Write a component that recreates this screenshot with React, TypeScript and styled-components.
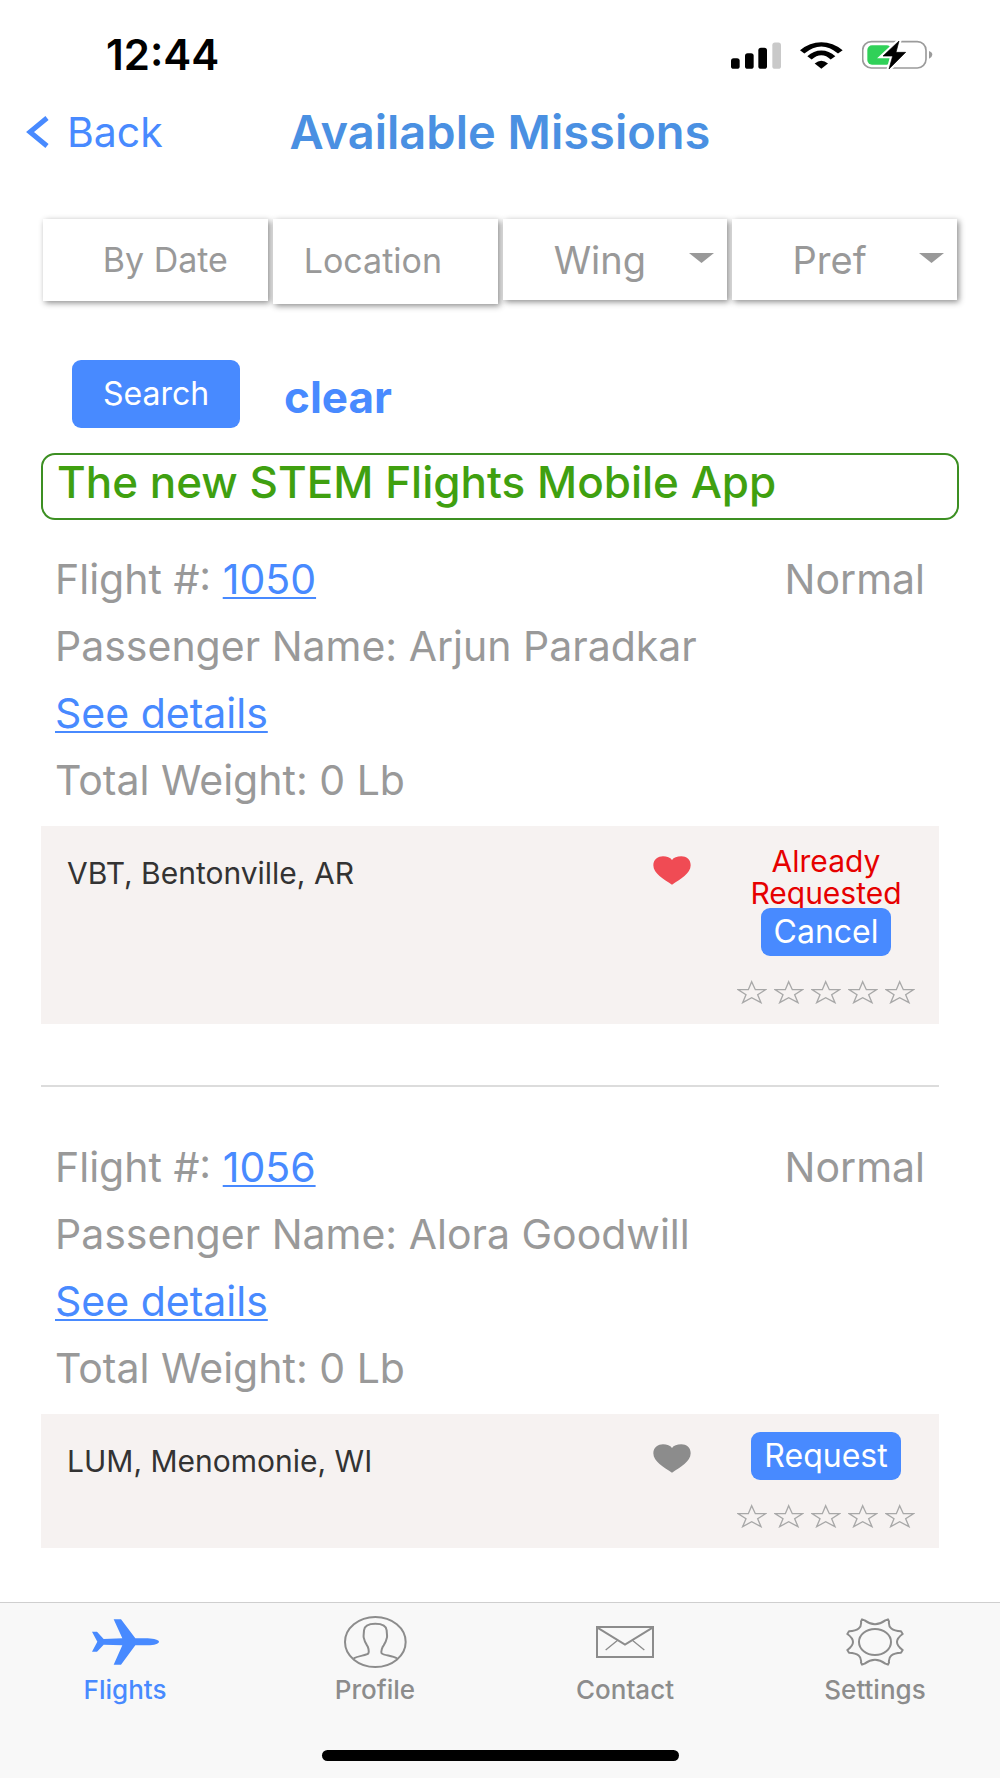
import React from "react";
import styled, { createGlobalStyle } from "styled-components";

const blue = "#488aff";
const gray = "#999999";

const GlobalStyle = createGlobalStyle`
  *, *::before, *::after { box-sizing: border-box; }
  body {
    margin: 0;
    background: #ffffff;
    color: ${gray};
    font-family: Inter, "Liberation Sans", sans-serif;
  }
  button, input, select { font: inherit; color: inherit; }
`;

const Page = styled.div`
  display: flex;
  flex-direction: column;
  min-height: 100vh;
`;

const StatusBar = styled.div`
  display: flex;
  align-items: center;
  justify-content: space-between;
  height: 96px;
  padding: 14px 67px 0 106px;
  color: #000000;
`;

const Clock = styled.time`
  font-size: 42px;
  font-weight: 600;
  line-height: 48px;
`;

const StatusIcons = styled.div`
  display: flex;
  align-items: center;
  gap: 19px;
`;

const Header = styled.header`
  display: grid;
  grid-template-columns: 1fr auto 1fr;
  align-items: center;
  height: 72px;
  padding: 0 26px;
`;

const BackButton = styled.button`
  display: flex;
  align-items: center;
  justify-self: start;
  gap: 17px;
  padding: 0;
  border: 0;
  background: none;
  color: ${blue};
  font-size: 41px;
  line-height: 48px;
`;

const Title = styled.h1`
  margin: 0;
  color: #4a90e2;
  font-size: 47px;
  font-weight: 600;
  line-height: 54px;
`;

const Main = styled.main`
  flex: 1;
  padding: 51px 41px 54px;
`;

const Filters = styled.div`
  display: grid;
  grid-template-columns: repeat(4, 1fr);
  align-items: start;
  gap: 5px;
  padding: 0 2px;
`;

const fieldShadow = "2px 2px 6px rgba(0, 0, 0, 0.45)";

const FilterInput = styled.input<{ $height: number; $indent: number; $center?: boolean }>`
  width: 100%;
  min-width: 0;
  height: ${(p) => p.$height}px;
  padding: 0 0 2px ${(p) => p.$indent}px;
  border: 0;
  background: #ffffff;
  box-shadow: ${fieldShadow};
  font-size: 34px;
  text-align: ${(p) => (p.$center ? "center" : "left")};
  &::placeholder { color: ${gray}; opacity: 1; }
`;

const SelectBox = styled.div`
  position: relative;
  height: 81px;
  background: #ffffff;
  box-shadow: ${fieldShadow};
`;

const FilterSelect = styled.select`
  width: 100%;
  height: 100%;
  padding: 0 30px 0 0;
  border: 0;
  appearance: none;
  background: transparent;
  font-size: 38px;
  text-align: center;
  text-align-last: center;
`;

const Caret = styled.svg`
  position: absolute;
  top: 34px;
  right: 13px;
  pointer-events: none;
`;

const Actions = styled.div`
  display: flex;
  align-items: center;
  gap: 44px;
  height: 68px;
  margin: 56px 31px 25px;
`;

const SearchButton = styled.button`
  width: 168px;
  height: 68px;
  padding: 0 0 2px;
  border: 0;
  border-radius: 9px;
  background: ${blue};
  color: #ffffff;
  font-size: 32px;
`;

const ClearButton = styled.button`
  padding: 6px 0 0;
  border: 0;
  background: none;
  color: ${blue};
  font-size: 44px;
  font-weight: 700;
`;

const Banner = styled.p`
  height: 67px;
  margin: 0 0 26px;
  padding: 0 14px;
  border: 2px solid #3c8f22;
  border-radius: 14px;
  color: #3fa010;
  font-size: 44px;
  font-weight: 500;
  line-height: 54px;
`;

const FlightList = styled.div`
  margin-right: 20px;
`;

const Flight = styled.article`
  & + & {
    margin-top: 61px;
    padding-top: 47px;
    border-top: 2px solid #dcdcdc;
  }
`;

const Facts = styled.div`
  padding: 0 14px 12px;
  font-size: 41px;
  line-height: 67px;
`;

const FactRow = styled.div`
  display: flex;
  justify-content: space-between;
`;

const Link = styled.a`
  color: ${blue};
  text-decoration: underline;
  text-decoration-thickness: 2px;
  text-underline-offset: 3px;
`;

const Leg = styled.div`
  display: grid;
  grid-template-columns: 1fr auto 180px;
  align-items: start;
  column-gap: 45px;
  padding: 18px 23px 20px 26px;
  background: #f6f2f1;
`;

const Airport = styled.span`
  padding-top: 13px;
  color: #333333;
  font-size: 30px;
  line-height: 32px;
`;

const HeartButton = styled.button`
  display: flex;
  padding: 12px 0 0;
  border: 0;
  background: none;
`;

const LegSide = styled.div`
  display: flex;
  flex-direction: column;
  align-items: center;
`;

const Notice = styled.span`
  height: 64px;
  padding-top: 1px;
  color: #e60000;
  font-size: 30px;
  line-height: 32px;
  text-align: center;
`;

const LegButton = styled.button`
  height: 48px;
  padding: 0 13px;
  border: 0;
  border-radius: 9px;
  background: ${blue};
  color: #ffffff;
  font-size: 32px;
  line-height: 48px;
`;

const Stars = styled.div`
  display: flex;
  gap: 7px;
  margin-top: 24px;
`;

const TabBar = styled.nav`
  border-top: 1px solid #cfcfcf;
  background: #f8f8f8;
`;

const Tabs = styled.div`
  display: grid;
  grid-template-columns: repeat(4, 1fr);
  height: 147px;
  padding-top: 11px;
`;

const Tab = styled.a<{ $active?: boolean }>`
  display: flex;
  flex-direction: column;
  align-items: center;
  gap: 6px;
  color: ${(p) => (p.$active ? blue : "#8c8c8c")};
  font-size: 26px;
  font-weight: 500;
  line-height: 28px;
  text-decoration: none;
`;

const TabIcon = styled.span`
  display: flex;
  align-items: center;
  height: 56px;
`;

const HomeIndicator = styled.div`
  width: 357px;
  height: 11px;
  margin: 0 auto 17px;
  border-radius: 6px;
  background: #000000;
`;

const SignalIcon = () => (
  <svg width="50" height="27" viewBox="694 124 150 80" aria-hidden="true">
    <rect x="694" y="172" width="26" height="32" rx="8" />
    <rect x="736" y="157" width="26" height="47" rx="8" />
    <rect x="776" y="141" width="26" height="63" rx="8" />
    <rect x="818" y="125" width="26" height="79" rx="8" fill="#c9c9c9" />
  </svg>
);

const WifiIcon = () => (
  <svg width="43" height="27" viewBox="901 124 129 80" aria-hidden="true">
    <path d="M901 148 Q930 124 965 124 T1029 148 L1015 158 Q990 137 965 137 T914 158 Z" />
    <path d="M923 166 Q942 149 965 149 T1007 166 L993 176 Q980 163 965 163 T936 176 Z" />
    <path d="M945 188 Q965 171 985 188 L965 204 Z" />
  </svg>
);

const BatteryIcon = () => (
  <svg width="71" height="30" viewBox="1086 119 213 90" aria-hidden="true">
    <rect x="1088" y="124" width="190" height="79" rx="26" fill="none" stroke="#9b9b9b" strokeWidth="5" />
    <path d="M1287 152 Q1297 156 1297 163 T1287 175 Z" fill="#9b9b9b" />
    <rect x="1102" y="135" width="72" height="58" rx="14" fill="#30d158" />
    <path d="M1197 122 L1149 167 H1178 L1167 206 L1217 156 H1188 Z" stroke="#ffffff" strokeWidth="14" />
    <path d="M1197 122 L1149 167 H1178 L1167 206 L1217 156 H1188 Z" stroke="#000000" strokeWidth="2" strokeLinejoin="round" />
  </svg>
);

const BackIcon = () => (
  <svg width="24" height="32" viewBox="0 0 24 32" fill="none" stroke="currentColor" strokeWidth="5" aria-hidden="true">
    <path d="M21 2 L4 16 L21 30" />
  </svg>
);

const HeartIcon = ({ color }: { color: string }) => (
  <svg width="38" height="29" viewBox="158 167 114 87" fill={color} aria-hidden="true">
    <path d="M215 253 C190 237 159 220 159 195 C159 177 174 168 188 168 C200 168 210 172 215 179 C220 172 230 168 243 168 C258 168 271 177 271 195 C271 220 240 237 215 253 Z" />
  </svg>
);

const StarIcon = () => (
  <svg width="30" height="24" viewBox="410 538 90 72" fill="none" stroke="#a8a8a8" strokeWidth="4" aria-hidden="true">
    <path d="M454 543 L465 567 H496 L472 582 L482 606 L454 591 L427 606 L437 582 L413 567 H444 Z" />
  </svg>
);

const PlaneIcon = () => (
  <svg width="67" height="46" viewBox="273 89 201 138" fill="currentColor" aria-hidden="true">
    <path d="M273 127 H288 L308 149 L364 147 L338 90 H360 L403 147 H440 C460 148 474 152 474 157 C474 163 460 167 440 168 H403 L360 226 H338 L364 168 L308 166 L288 187 H273 L289 157 Z" />
  </svg>
);

const PersonIcon = () => (
  <svg width="63" height="52" viewBox="1031 79 189 156" fill="none" stroke="currentColor" strokeWidth="6" aria-hidden="true">
    <ellipse cx="1125" cy="157" rx="91" ry="75" />
    <path d="M1060 206 C1075 198 1100 197 1104 191 C1107 185 1104 172 1100 167 C1094 158 1092 153 1090 143 C1089 138 1091 128 1091 122 C1092 108 1105 102 1125 102 C1145 102 1158 108 1159 122 C1159 128 1161 138 1160 143 C1158 153 1156 158 1150 167 C1146 172 1141 185 1144 191 C1150 197 1175 198 1190 206" />
  </svg>
);

const MailIcon = () => (
  <svg width="58" height="32" viewBox="287 109 174 96" fill="none" stroke="currentColor" strokeWidth="6" aria-hidden="true">
    <rect x="290" y="112" width="168" height="90" />
    <path d="M290 113 L374 165 L458 113" />
    <path d="M352 152 L316 181 M396 152 L432 181" strokeWidth="4" />
  </svg>
);

const CogIcon = () => (
  <svg width="58" height="48" viewBox="1038 85 174 144" fill="none" stroke="currentColor" strokeWidth="6" strokeLinejoin="round" aria-hidden="true">
    <path d="M1094 92 Q1125 115 1156 92 L1164 89 L1167 95 Q1163 123 1203 125 L1208 133 Q1174 157 1208 181 L1203 189 Q1163 191 1167 219 L1164 225 L1156 222 Q1125 199 1094 222 L1086 225 L1083 219 Q1087 191 1047 189 L1042 181 Q1076 157 1042 133 L1047 125 Q1087 123 1083 95 L1086 89 Z" />
    <ellipse cx="1125" cy="157" rx="48" ry="39" />
  </svg>
);

const FilterDropdown = ({ name }: { name: string }) => (
  <SelectBox>
    <FilterSelect aria-label={name}>
      <option>{name}</option>
    </FilterSelect>
    <Caret width="25" height="10" viewBox="0 0 25 10" fill={gray} aria-hidden="true">
      <path d="M0 0 H25 L12.5 10 Z" />
    </Caret>
  </SelectBox>
);

type FlightInfo = {
  id: string;
  passenger: string;
  airport: string;
  requested: boolean;
};

const flights: FlightInfo[] = [
  { id: "1050", passenger: "Arjun Paradkar", airport: "VBT, Bentonville, AR", requested: true },
  { id: "1056", passenger: "Alora Goodwill", airport: "LUM, Menomonie, WI", requested: false },
];

const FlightCard = ({ flight }: { flight: FlightInfo }) => (
  <Flight>
    <Facts>
      <FactRow>
        <span>
          Flight #: <Link href="#flight">{flight.id}</Link>
        </span>
        <span>Normal</span>
      </FactRow>
      <div>Passenger Name: {flight.passenger}</div>
      <div>
        <Link href="#details">See details</Link>
      </div>
      <div>Total Weight: 0 Lb</div>
    </Facts>
    <Leg>
      <Airport>{flight.airport}</Airport>
      <HeartButton aria-label="Favorite" aria-pressed={flight.requested}>
        <HeartIcon color={flight.requested ? "#f04b54" : "#8c8c8c"} />
      </HeartButton>
      <LegSide>
        {flight.requested && <Notice>Already Requested</Notice>}
        <LegButton>{flight.requested ? "Cancel" : "Request"}</LegButton>
        <Stars role="img" aria-label="Not rated">
          {[1, 2, 3, 4, 5].map((n) => (
            <StarIcon key={n} />
          ))}
        </Stars>
      </LegSide>
    </Leg>
  </Flight>
);

const tabs = [
  { label: "Flights", icon: <PlaneIcon /> },
  { label: "Profile", icon: <PersonIcon /> },
  { label: "Contact", icon: <MailIcon /> },
  { label: "Settings", icon: <CogIcon /> },
];

export default function App() {
  return (
    <Page>
      <GlobalStyle />
      <StatusBar>
        <Clock>12:44</Clock>
        <StatusIcons>
          <SignalIcon />
          <WifiIcon />
          <BatteryIcon />
        </StatusIcons>
      </StatusBar>
      <Header>
        <BackButton>
          <BackIcon />
          Back
        </BackButton>
        <Title>Available Missions</Title>
      </Header>
      <Main>
        <Filters>
          <FilterInput $height={82} $indent={20} $center placeholder="By Date" aria-label="By Date" />
          <FilterInput $height={85} $indent={31} placeholder="Location" aria-label="Location" />
          <FilterDropdown name="Wing" />
          <FilterDropdown name="Pref" />
        </Filters>
        <Actions>
          <SearchButton>Search</SearchButton>
          <ClearButton>clear</ClearButton>
        </Actions>
        <Banner>The new STEM Flights Mobile App</Banner>
        <FlightList>
          {flights.map((flight) => (
            <FlightCard key={flight.id} flight={flight} />
          ))}
        </FlightList>
      </Main>
      <TabBar>
        <Tabs>
          {tabs.map((tab, i) => (
            <Tab key={tab.label} href={`#${tab.label.toLowerCase()}`} $active={i === 0}>
              <TabIcon>{tab.icon}</TabIcon>
              {tab.label}
            </Tab>
          ))}
        </Tabs>
        <HomeIndicator />
      </TabBar>
    </Page>
  );
}
